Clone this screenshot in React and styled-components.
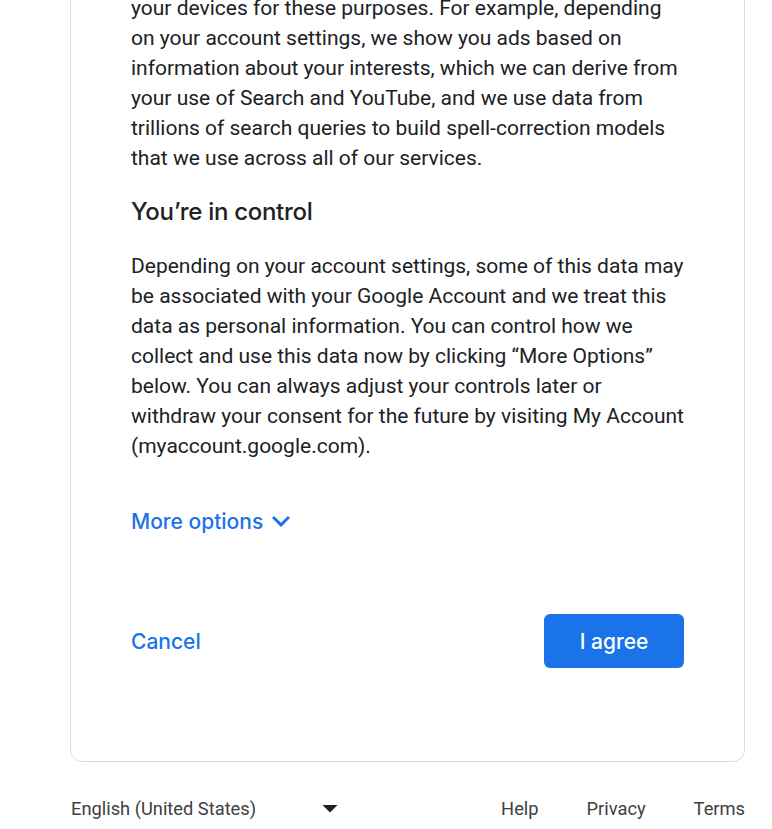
import styled, { createGlobalStyle } from "styled-components";

const GlobalStyle = createGlobalStyle`
  html, body {
    margin: 0;
    padding: 0;
    background: #ffffff;
    overflow: hidden;
  }
  * {
    box-sizing: border-box;
  }
`;

const Page = styled.div`
  width: 772px;
  height: 829px;
  padding-left: 70px;
  overflow: hidden;
`;

const Card = styled.div`
  width: 675px;
  margin-top: -60px;
  padding: 52px 60px 93px;
  border: 1px solid #dadce0;
  border-radius: 12px;
  display: flex;
  flex-direction: column;
`;

const Paragraph = styled.p`
  margin: 0;
  color: #202124;
  font-family: Roboto, "Liberation Sans", sans-serif;
  font-size: 21px;
  line-height: 30px;
`;

const Heading = styled.h2`
  margin: 23px 0 23px;
  color: #202124;
  font-family: Inter, "Open Sans", sans-serif;
  font-size: 24px;
  font-weight: 500;
  letter-spacing: -0.3px;
  line-height: 32px;
`;

const MoreOptions = styled.button`
  align-self: flex-start;
  margin-top: 42px;
  padding: 0;
  border: none;
  background: none;
  display: flex;
  align-items: center;
  height: 36px;
  color: #1a73e8;
  font-family: Inter, "Open Sans", sans-serif;
  font-size: 21px;
  font-weight: 500;
  cursor: pointer;
`;

const Actions = styled.div`
  margin-top: 75px;
  display: flex;
  justify-content: space-between;
  align-items: center;
`;

const TextButton = styled.button`
  padding: 0;
  border: none;
  background: none;
  color: #1a73e8;
  font-family: Inter, "Open Sans", sans-serif;
  font-size: 21px;
  font-weight: 500;
  cursor: pointer;
`;

const PrimaryButton = styled.button`
  height: 54px;
  width: 140px;
  padding: 0;
  border: none;
  border-radius: 6px;
  background: #1a73e8;
  color: #ffffff;
  font-family: Inter, "Open Sans", sans-serif;
  font-size: 21px;
  font-weight: 500;
  cursor: pointer;
`;

const Footer = styled.div`
  width: 675px;
  margin-top: 28px;
  height: 36px;
  display: flex;
  justify-content: space-between;
  align-items: center;
  font-family: Roboto, "Liberation Sans", sans-serif;
  font-size: 18.3px;
  color: #3c4043;
`;

const LanguageSelect = styled.div`
  width: 278px;
  padding-left: 1px;
  display: flex;
  justify-content: space-between;
  align-items: center;
`;

const Links = styled.div`
  display: flex;
  gap: 48px;
`;

const FooterLink = styled.a`
  color: #3c4043;
  text-decoration: none;
`;

function ChevronDown() {
  return (
    <svg width="36" height="36" viewBox="0 0 24 24" fill="#1a73e8">
      <path d="M16.59 8.59L12 13.17 7.41 8.59 6 10l6 6 6-6z" />
    </svg>
  );
}

function ArrowDrop() {
  return (
    <svg width="36" height="36" viewBox="0 0 24 24" fill="#202124">
      <path d="M7 10l5 5 5-5z" />
    </svg>
  );
}

export default function App() {
  return (
    <>
      <GlobalStyle />
      <Page>
        <Card>
          <Paragraph>
            your devices for these purposes. For example, depending on your
            account settings, we show you ads based on information about your
            interests, which we can derive from your use of Search and YouTube,
            and we use data from trillions of search queries to build
            spell-correction models that we use across all of our services.
          </Paragraph>
          <Heading>You’re in control</Heading>
          <Paragraph>
            Depending on your account settings, some of this data may be
            associated with your Google Account and we treat this data as
            personal information. You can control how we collect and use this
            data now by clicking “More Options” below. You can always adjust
            your controls later or withdraw your consent for the future by
            visiting My Account (myaccount.google.com).
          </Paragraph>
          <MoreOptions>
            More options
            <ChevronDown />
          </MoreOptions>
          <Actions>
            <TextButton>Cancel</TextButton>
            <PrimaryButton>I agree</PrimaryButton>
          </Actions>
        </Card>
        <Footer>
          <LanguageSelect>
            <span>English (United States)</span>
            <ArrowDrop />
          </LanguageSelect>
          <Links>
            <FooterLink href="#">Help</FooterLink>
            <FooterLink href="#">Privacy</FooterLink>
            <FooterLink href="#">Terms</FooterLink>
          </Links>
        </Footer>
      </Page>
    </>
  );
}
